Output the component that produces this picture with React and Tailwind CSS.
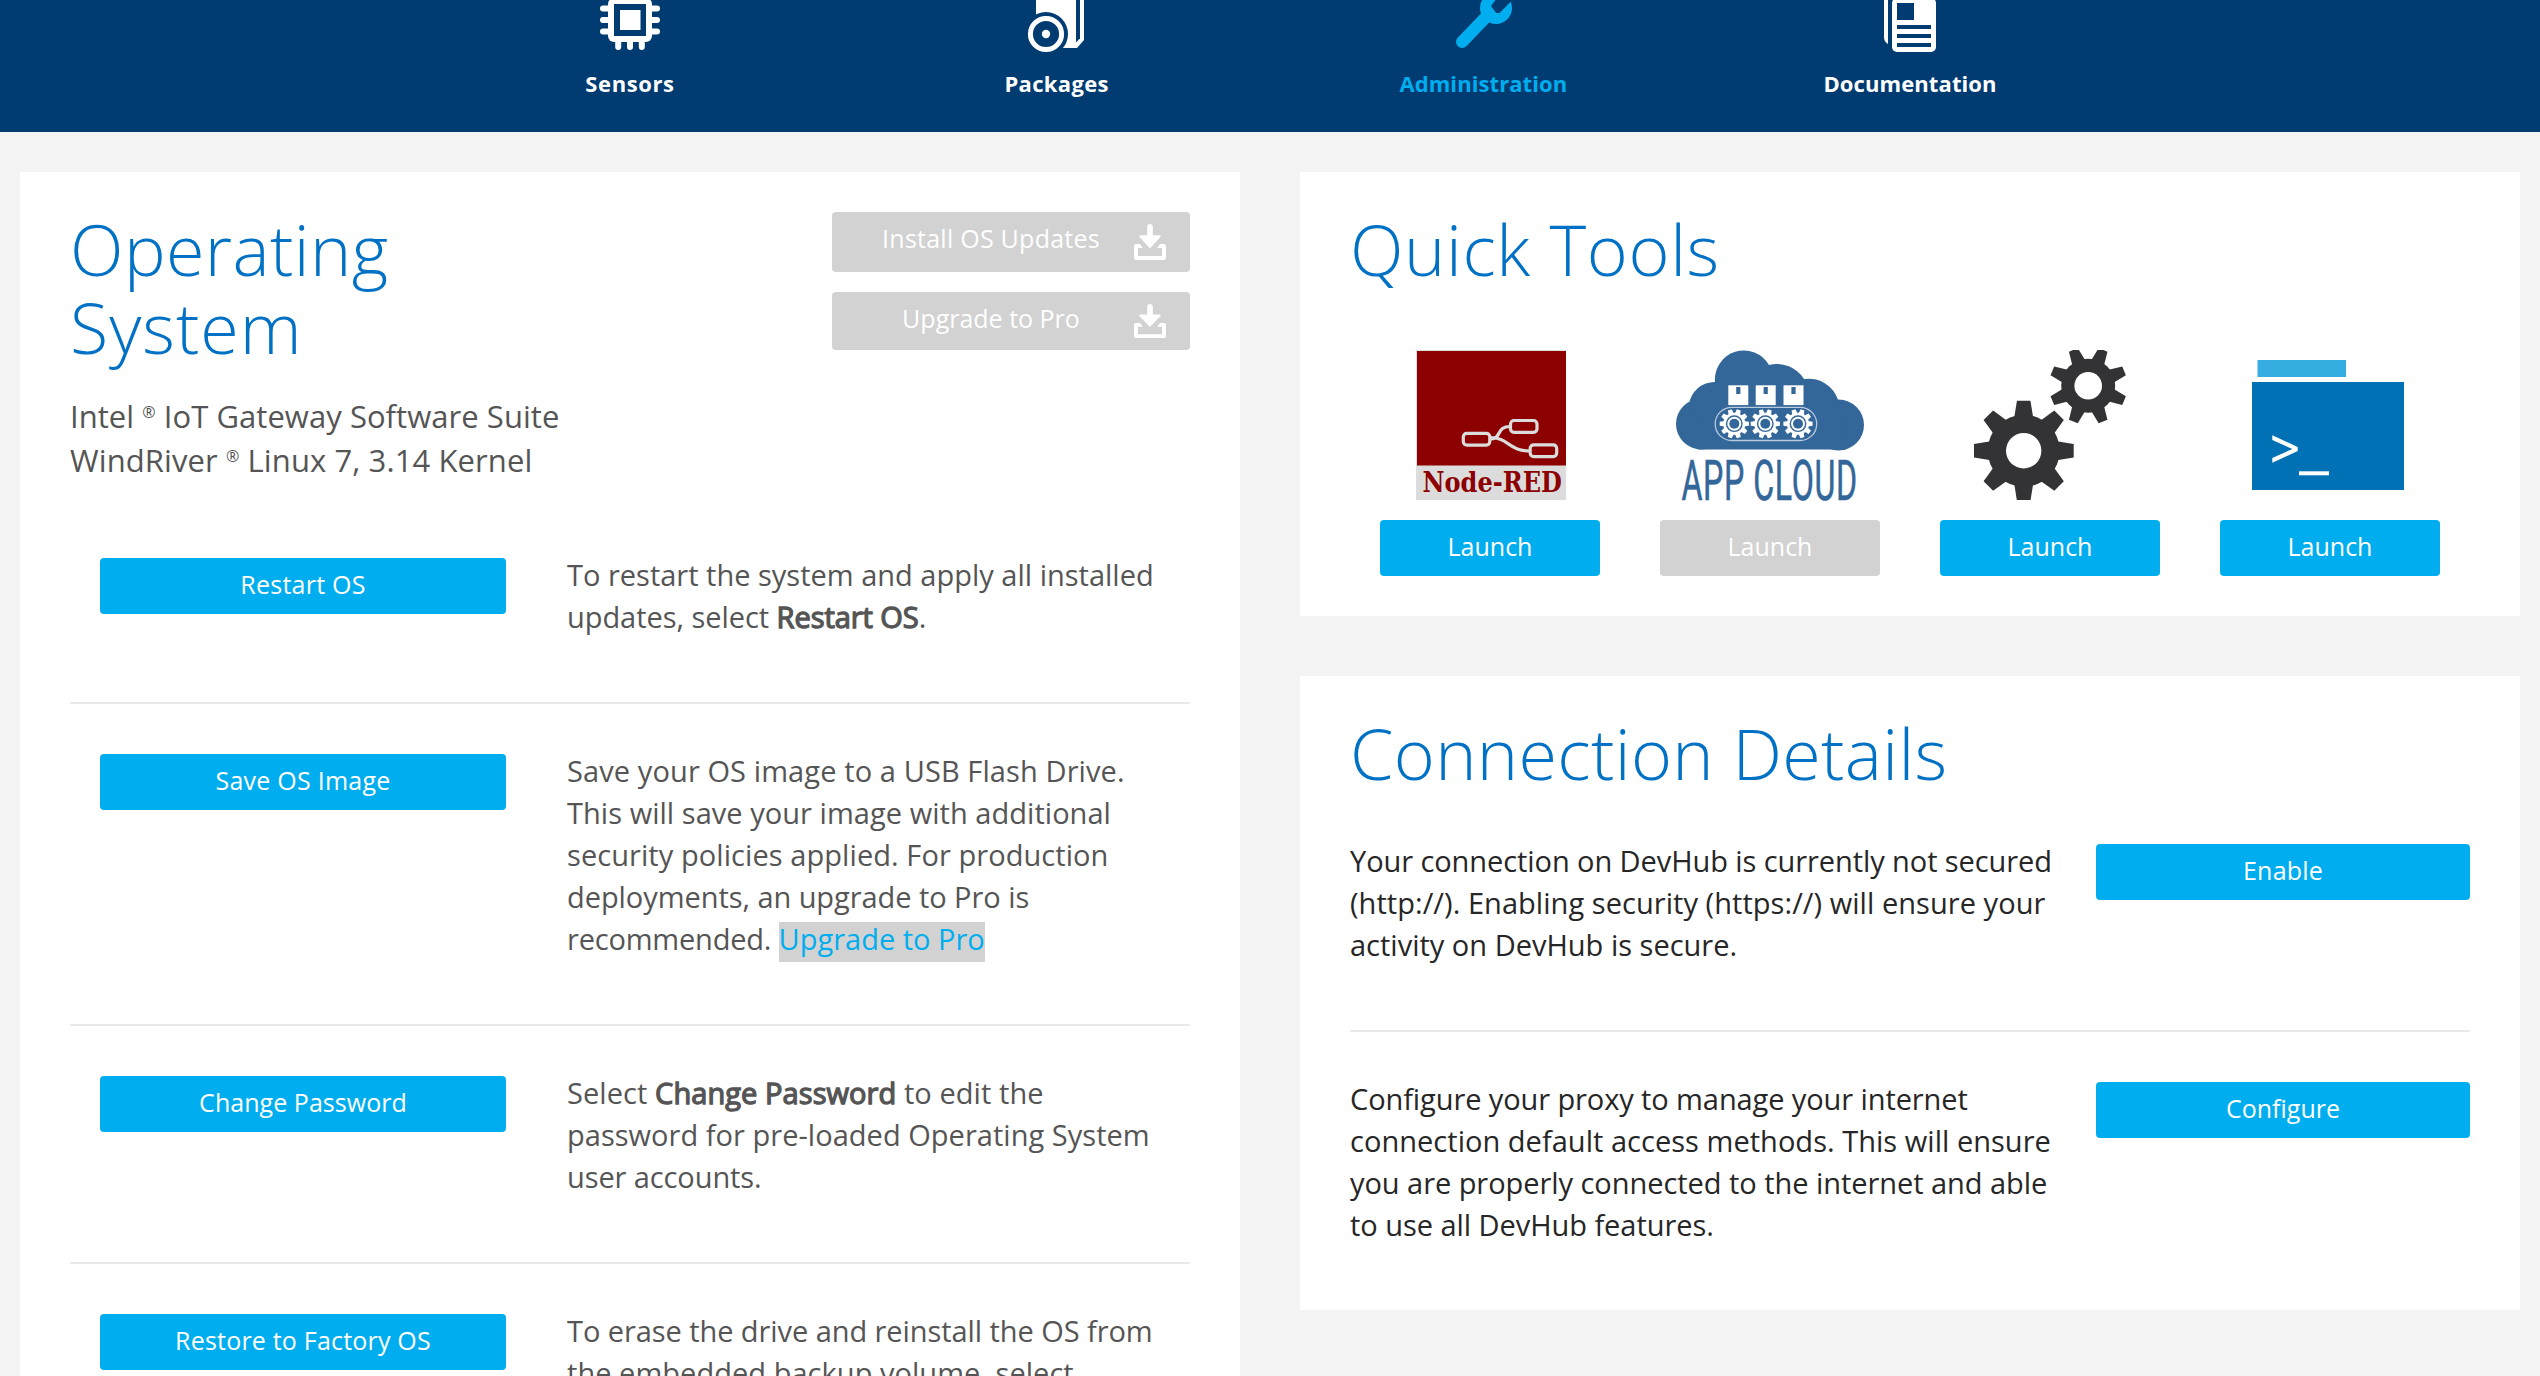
import React from "react";

const NAVY = "#003c71";

function ChipIcon() {
  return (
    <svg width="60" height="68" viewBox="0 0 60 68" fill="#fff">
      <rect x="0" y="5.5" width="60" height="6" rx="3" />
      <rect x="0" y="17" width="60" height="6" rx="3" />
      <rect x="0" y="28.5" width="60" height="6" rx="3" />
      <rect x="15.2" y="30" width="6" height="20" rx="3" />
      <rect x="27" y="30" width="6" height="20" rx="3" />
      <rect x="38.8" y="30" width="6" height="20" rx="3" />
      <rect x="8" y="-2" width="44" height="44" rx="6" />
      <rect x="14" y="4" width="32" height="32" fill={NAVY} />
      <rect x="20" y="10" width="20.5" height="20" />
    </svg>
  );
}

function PackageIcon() {
  return (
    <svg width="60" height="68" viewBox="0 0 60 68" fill="#fff">
      <path d="M9 -2H57V40L50 48H9Z" />
      <path d="M49 -2H53V38.2L49 42.5Z" fill={NAVY} />
      <circle cx="19" cy="34" r="22" fill={NAVY} />
      <circle cx="19" cy="34" r="15.6" fill="none" stroke="#fff" strokeWidth="5" />
      <circle cx="19" cy="34" r="4.2" />
    </svg>
  );
}

function WrenchIcon() {
  return (
    <svg width="60" height="68" viewBox="0 0 60 68" fill="#00aeef">
      <path d="M9 42L34 16" stroke="#00aeef" strokeWidth="12" strokeLinecap="round" />
      <circle cx="43" cy="8" r="16" />
      <path d="M44 -2L38 6L43.2 13H46.6L58.4 1L62 -3Z" fill={NAVY} />
    </svg>
  );
}

function DocsIcon() {
  return (
    <svg width="60" height="68" viewBox="0 0 60 68" fill="#fff">
      <path d="M4 -2H8V44Q4.500 42 4 38Z" />
      <rect x="12" y="-2" width="44" height="54" rx="5" />
      <g fill={NAVY}>
        <rect x="17" y="3" width="17" height="17" />
        <rect x="17" y="25" width="34" height="4" />
        <rect x="17" y="34" width="34" height="4" />
        <rect x="17" y="43" width="34" height="4" />
      </g>
    </svg>
  );
}

function DownloadIcon({ className }) {
  return (
    <svg className={className} viewBox="0 0 32 36" preserveAspectRatio="none" fill="#fff">
      <path d="M13.200 2.800a2.800 2.800 0 0 1 5.600 0V11.200H25.400q2.200 .3 .8 2L16.900 23.400q-.9 .9-1.800 0L5.800 13.200q-1.400-1.700 .8-2H13.200Z" />
      <path d="M6 20L8.800 24H4V32H28V24H23.200L26 20H30a2 2 0 0 1 2 2V34a2 2 0 0 1-2 2H2a2 2 0 0 1-2-2V22a2 2 0 0 1 2-2Z" />
    </svg>
  );
}

function NodeRedLogo() {
  return (
    <svg width="150" height="150" viewBox="0 0 150 150" className="ml-0.5">
      <rect width="150" height="150" fill="#dcdcdc" />
      <rect x="1" y="1" width="149" height="114.500" fill="#8c0000" />
      <g fill="none" stroke="#dcdcdc" strokeWidth="3.200">
        <rect x="47.300" y="83.300" width="26.500" height="11.800" rx="3.500" />
        <rect x="94.500" y="70.500" width="26.500" height="11.800" rx="3.500" />
        <rect x="114.200" y="94.800" width="26.500" height="11.800" rx="3.500" />
        <path d="M74 89C86 89 80 76.500 94 76.500" />
        <path d="M74 87.500C93 87.500 92 101 114 101" />
      </g>
      <text x="6.500" y="142.300" textLength="139.500" lengthAdjust="spacingAndGlyphs" fill="#8c0000" className="font-['DejaVu_Serif',serif] text-[27px] font-bold">Node-RED</text>
    </svg>
  );
}

const teeth = (count, offset = 0) => Array.from({ length: count }, (_, i) => offset + (i * 360) / count);

function Gear({ cx, cy, body, outer, base, tip, hole, count, offset = 0, fill, holeFill }) {
  return (
    <g transform={`translate(${cx} ${cy})`} fill={fill}>
      <circle r={body} />
      {teeth(count, offset).map((a) => (
        <path key={a} transform={`rotate(${a})`} d={`M${-base / 2} ${-body + 3}L${-tip / 2} ${-outer}H${tip / 2}L${base / 2} ${-body + 3}Z`} />
      ))}
      <circle r={hole} fill={holeFill} />
    </g>
  );
}

function AppCloudLogo() {
  const blue = "#336699";
  return (
    <svg width="188" height="150" viewBox="0 0 188 150" className="overflow-visible">
      <circle cx="25.500" cy="74" r="25.500" fill={blue} />
      <circle cx="162.500" cy="75" r="25.500" fill={blue} />
      <path fill={blue} d="M22 99.500V74L13 54.500A26 26 0 0 1 39 32A29 29 0 0 1 93 15A32 32 0 0 1 128 29A31 31 0 0 1 162.300 50.500L170 99.500Z" />
      {[52.3, 79.7, 107.5].map((x) => (
        <g key={x}>
          <rect x={x} y="35.300" width="20" height="19.800" fill="#fff" />
          <rect x={x + 7.9} y="37" width="4.200" height="7" fill={blue} />
        </g>
      ))}
      <rect x="39.200" y="57.300" width="101.500" height="33.200" rx="16.600" fill="none" stroke="#b8cadd" strokeWidth="1.300" />
      {[58.3, 89.3, 122].map((x) => (
        <g key={x}>
          <Gear cx={x} cy={73.7} body={11} outer={14.6} base={6} tip={4} hole={8.4} count={10} offset={18} fill="#fff" holeFill={blue} />
          <circle cx={x} cy="73.700" r="7" fill="#fff" />
          <circle cx={x} cy="73.700" r="5" fill={blue} />
        </g>
      ))}
      <text x="9.400" y="150" transform="scale(0.585 1)" textLength="300" fill={blue} stroke={blue} strokeWidth="0.600" className="font-[Roboto,sans-serif] text-[55px] font-normal">APP CLOUD</text>
    </svg>
  );
}

function GearsLogo() {
  return (
    <svg width="152" height="150" viewBox="0 0 152 150">
      <Gear cx={49.7} cy={100.7} body={36} outer={50} base={19} tip={13.5} hole={17.7} count={8} fill="#333335" holeFill="#fff" />
      <Gear cx={114.2} cy={35.7} body={27} outer={38.800} base={14} tip={9.5} hole={13.8} count={8} offset={22.5} fill="#333335" holeFill="#fff" />
    </svg>
  );
}

function TerminalLogo() {
  return (
    <svg width="156" height="150" viewBox="0 0 156 150">
      <rect x="5.500" y="10" width="88.500" height="17" fill="#35ade1" />
      <rect x="0" y="32" width="152" height="108" fill="#0071b5" />
      <path d="M20.300 85.200L45.700 97V101L20.300 112.800V108L40.400 99L20.300 90Z" fill="#fff" />
      <rect x="47" y="121.300" width="30" height="4" fill="#fff" />
    </svg>
  );
}

const navItems = [
  { label: "Sensors", Icon: ChipIcon, className: "tracking-[0.6px] text-white" },
  { label: "Packages", Icon: PackageIcon, className: "tracking-[0.35px] text-white" },
  { label: "Administration", Icon: WrenchIcon, className: "tracking-[0.08px] text-[#00aeef]" },
  { label: "Documentation", Icon: DocsIcon, className: "tracking-[0.1px] text-white" },
];

const tools = [
  { Logo: NodeRedLogo },
  { Logo: AppCloudLogo, disabled: true },
  { Logo: GearsLogo },
  { Logo: TerminalLogo },
];

function Button({ children, className = "", disabled = false }) {
  return (
    <button
      className={`block h-14 shrink-0 rounded-[4px] pb-1 text-center text-[25px] leading-[52px] text-white ${disabled ? "bg-[#d2d2d2]" : "bg-[#00aeef]"} ${className}`}
    >
      {children}
    </button>
  );
}

function UpdateButton({ children, className = "", iconClass }) {
  return (
    <button className={`flex w-[358px] rounded-[4px] bg-[#d2d2d2] text-[25px] leading-[52px] text-white ${className}`}>
      <span className="ml-4 flex-1 text-center">{children}</span>
      <DownloadIcon className={`mr-6 mt-3 w-8 shrink-0 ${iconClass}`} />
    </button>
  );
}

function Heading({ children, className = "" }) {
  return <h2 className={`text-[70px] font-light leading-[78px] text-[#0071c5] ${className}`}>{children}</h2>;
}

const Line = ({ children, className = "" }) => <span className={`block whitespace-pre ${className}`}>{children}</span>;

const Strong = ({ children }) => <span className="[-webkit-text-stroke:1.3px_#555]">{children}</span>;

const Reg = () => <span className="relative -top-[10px] text-[16px] leading-none">®</span>;

function OsRow({ label, labelClass, children, last = false }) {
  return (
    <div className={`flex pl-[30px] pb-16 ${last ? "" : "mb-[46px] border-b-2 border-[#e9e9e9]"}`}>
      <Button className={`mt-1 w-[406px] ${labelClass}`}>{label}</Button>
      <p className="ml-[61px] text-[29px] leading-[42px] text-[#555]">{children}</p>
    </div>
  );
}

function ConnectionRow({ label, labelClass, children, last = false }) {
  return (
    <div className={`flex justify-between pb-16 ${last ? "" : "mb-[46px] border-b-2 border-[#e9e9e9]"}`}>
      <p className="text-[29px] leading-[42px] text-[#262626]">{children}</p>
      <Button className={`mt-1 w-[374px] ${labelClass}`}>{label}</Button>
    </div>
  );
}

export default function App() {
  return (
    <div className="h-[1376px] w-[2540px] overflow-hidden bg-[#f3f3f3] font-['Open_Sans','Noto_Sans',sans-serif]">
      <header className="flex h-[132px] justify-center overflow-hidden bg-[#003c71]">
        {navItems.map(({ label, Icon, className }) => (
          <a key={label} className="flex w-[426.7px] flex-col items-center">
            <Icon />
            <span className={`text-[22px] font-bold leading-[30px] ${className}`}>{label}</span>
          </a>
        ))}
      </header>

      <main className="flex items-start gap-[60px] px-5 pt-10">
        <section className="w-[1220px] bg-white px-[50px] pt-[38px]">
          <div className="flex items-start justify-between">
            <Heading className="w-[400px]">
              <Line className="tracking-[0.4px]">Operating</Line>
              <Line className="tracking-[1px]">System</Line>
            </Heading>
            <div className="mt-0.5 flex flex-col gap-5">
              <UpdateButton className="h-[60px] tracking-[0.25px]" iconClass="h-9">
                Install OS Updates
              </UpdateButton>
              <UpdateButton className="h-[58px]" iconClass="h-[34px]">
                Upgrade to Pro
              </UpdateButton>
            </div>
          </div>

          <div className="mt-7 h-[88px] text-[31px] leading-[44px] text-[#555]">
            <Line className="h-11 tracking-[0.05px]">Intel <Reg /> IoT Gateway Software Suite</Line>
            <Line className="h-11 tracking-[0.1px]">WindRiver <Reg /> Linux 7, 3.14 Kernel</Line>
          </div>

          <div className="mt-[72px]">
            <OsRow label="Restart OS" labelClass="tracking-[0.25px]">
              <Line>To restart the system and apply all installed</Line>
              <Line className="tracking-[-0.05px]">updates, select <Strong>Restart OS</Strong>.</Line>
            </OsRow>
            <OsRow label="Save OS Image" labelClass="tracking-[0.25px]">
              <Line className="tracking-[0.1px]">Save your OS image to a USB Flash Drive.</Line>
              <Line className="tracking-[0.04px]">This will save your image with additional</Line>
              <Line className="tracking-[0.07px]">security policies applied. For production</Line>
              <Line className="tracking-[-0.06px]">deployments, an upgrade to Pro is</Line>
              <Line className="h-[42px] tracking-[-0.2px]">
                {"recommended. "}
                <a className="mt-1 inline-block h-10 bg-[#d2d2d2] align-top leading-[34px] tracking-normal text-[#00aeef]">Upgrade to Pro</a>
              </Line>
            </OsRow>
            <OsRow label="Change Password" labelClass="tracking-[0.05px]">
              <Line className="tracking-[0.07px]">Select <Strong>Change Password</Strong> to edit the</Line>
              <Line className="tracking-[0.03px]">password for pre-loaded Operating System</Line>
              <Line className="tracking-[-0.1px]">user accounts.</Line>
            </OsRow>
            <OsRow label="Restore to Factory OS" labelClass="tracking-[0.2px]" last>
              <Line className="tracking-[-0.07px]">To erase the drive and reinstall the OS from</Line>
              <Line className="tracking-[0.04px]">the embedded backup volume, select</Line>
            </OsRow>
          </div>
        </section>

        <div className="flex w-[1220px] flex-col gap-[60px]">
          <section className="bg-white px-[50px] pb-10 pt-[38px]">
            <Heading className="tracking-[0.6px]">Quick Tools</Heading>
            <div className="mt-[62px] flex gap-[60px] pl-[30px]">
              {tools.map(({ Logo, disabled }, i) => (
                <div key={i} className="flex w-[220px] flex-col items-center gap-5">
                  <Logo />
                  <Button disabled={disabled} className="w-[220px]">Launch</Button>
                </div>
              ))}
            </div>
          </section>

          <section className="bg-white px-[50px] pt-[38px]">
            <Heading className="mb-12 tracking-[0.35px]">Connection Details</Heading>
            <ConnectionRow label="Enable" labelClass="tracking-[0.2px]">
              <Line className="tracking-[-0.08px]">Your connection on DevHub is currently not secured</Line>
              <Line className="tracking-[0.05px]">(http://). Enabling security (https://) will ensure your</Line>
              <Line>activity on DevHub is secure.</Line>
            </ConnectionRow>
            <ConnectionRow label="Configure" last>
              <Line className="tracking-[-0.1px]">Configure your proxy to manage your internet</Line>
              <Line className="tracking-[0.03px]">connection default access methods. This will ensure</Line>
              <Line className="tracking-[-0.05px]">you are properly connected to the internet and able</Line>
              <Line className="tracking-[-0.05px]">to use all DevHub features.</Line>
            </ConnectionRow>
          </section>
        </div>
      </main>
    </div>
  );
}
